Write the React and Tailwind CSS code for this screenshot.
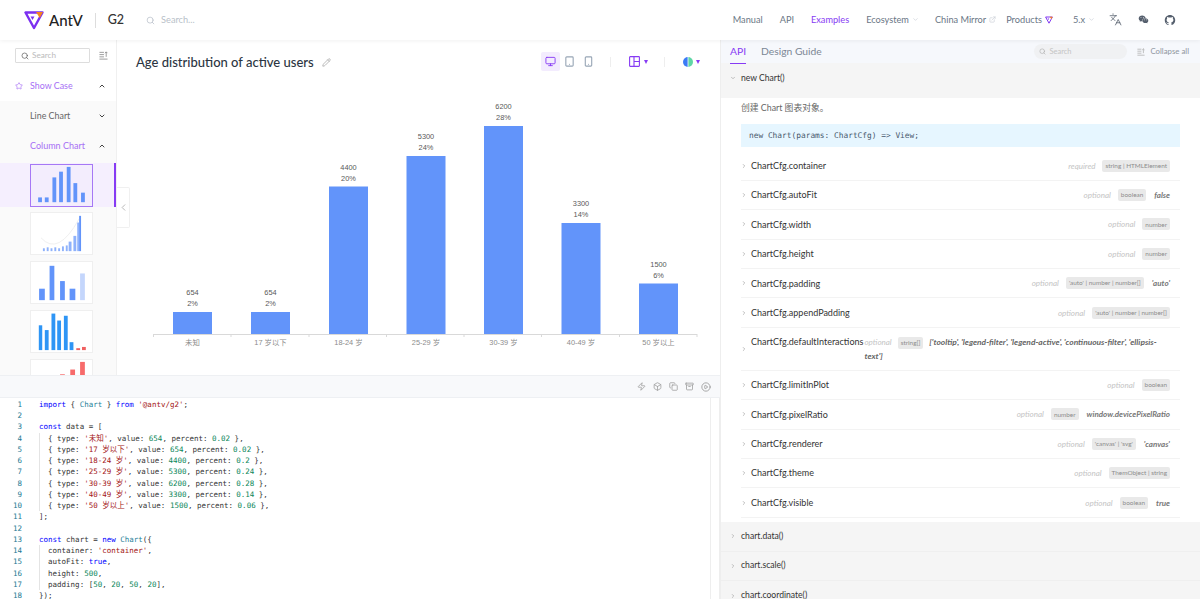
import {
  ChevronDown, ChevronLeft, ChevronRight, ChevronUp, CirclePlay, Copy, ExternalLink, Languages,
  Monitor, Pencil, Search, Smartphone, Star, Tablet, Zap, Box, Archive,
} from 'lucide-react';
import { AiFillWechat, AiOutlineGithub } from 'react-icons/ai';

const K = 'text-[#0000ff]';
const T = 'text-[#267f99]';
const S = 'text-[#a31515]';
const N = 'text-[#098658]';

const dataLine = (type, value, percent) => [
  ['  { type: '], [`'${type}'`, S], [', value: '], [value, N], [', percent: '], [percent, N], [' },'],
];

const CODE = [
  [['import', K], [' { '], ['Chart', T], [' } '], ['from', K], [' '], ["'@antv/g2'", S], [';']],
  [],
  [['const', K], [' data = [']],
  dataLine('未知', '654', '0.02'),
  dataLine('17 岁以下', '654', '0.02'),
  dataLine('18-24 岁', '4400', '0.2'),
  dataLine('25-29 岁', '5300', '0.24'),
  dataLine('30-39 岁', '6200', '0.28'),
  dataLine('40-49 岁', '3300', '0.14'),
  dataLine('50 岁以上', '1500', '0.06'),
  [['];']],
  [],
  [['const', K], [' chart = '], ['new', K], [' '], ['Chart', T], ['({']],
  [['  container: '], ["'container'", S], [',']],
  [['  autoFit: '], ['true', K], [',']],
  [['  height: '], ['500', N], [',']],
  [['  padding: ['], ['50', N], [', '], ['20', N], [', '], ['50', N], [', '], ['20', N], ['],']],
  [['});']],
];

const BARS = [
  { label: '未知', value: '654', pct: '2%', x: 56, top: 212 },
  { label: '17 岁以下', value: '654', pct: '2%', x: 134, top: 212 },
  { label: '18-24 岁', value: '4400', pct: '20%', x: 212, top: 86.5 },
  { label: '25-29 岁', value: '5300', pct: '24%', x: 289.5, top: 56 },
  { label: '30-39 岁', value: '6200', pct: '28%', x: 367, top: 26 },
  { label: '40-49 岁', value: '3300', pct: '14%', x: 444.5, top: 123 },
  { label: '50 岁以上', value: '1500', pct: '6%', x: 522, top: 183.5 },
];

const ROWS = [
  { name: 'ChartCfg.container', req: 'required', type: 'string | HTMLElement' },
  { name: 'ChartCfg.autoFit', req: 'optional', type: 'boolean', def: 'false' },
  { name: 'ChartCfg.width', req: 'optional', type: 'number' },
  { name: 'ChartCfg.height', req: 'optional', type: 'number' },
  { name: 'ChartCfg.padding', req: 'optional', type: "'auto' | number | number[]", def: "'auto'" },
  { name: 'ChartCfg.appendPadding', req: 'optional', type: "'auto' | number | number[]" },
];

const ROWS_AFTER = [
  { name: 'ChartCfg.limitInPlot', req: 'optional', type: 'boolean' },
  { name: 'ChartCfg.pixelRatio', req: 'optional', type: 'number', def: 'window.devicePixelRatio' },
  { name: 'ChartCfg.renderer', req: 'optional', type: "'canvas' | 'svg'", def: "'canvas'" },
  { name: 'ChartCfg.theme', req: 'optional', type: 'ThemObject | string' },
  { name: 'ChartCfg.visible', req: 'optional', type: 'boolean', def: 'true' },
];

function Logo({ className }) {
  return (
    <svg viewBox="0 0 20 20" className={className}>
      <path d="M1.5 2.5h17L10 18z" fill="none" stroke="#7b2ff0" strokeWidth="2.4" strokeLinejoin="round" />
      <path d="M12 2h7l-3.2 6z" fill="#f5841f" />
      <path d="M6.5 6.5h4L8.5 10z" fill="#7b2ff0" />
    </svg>
  );
}

function CollapseIcon({ className }) {
  return (
    <svg viewBox="0 0 10 10" className={className} fill="none" stroke="currentColor" strokeWidth="0.9">
      <path d="M0.5 1.5h5M0.5 4h5M0.5 6.5h5M0.5 9h9M8 6.5V1M6.6 2.4 8 1l1.4 1.4" />
    </svg>
  );
}

function LayoutIcon({ className }) {
  return (
    <svg viewBox="0 0 11 11" className={className} fill="none" stroke="currentColor" strokeWidth="1.1">
      <rect x="0.6" y="0.6" width="9.8" height="9.8" rx="0.6" />
      <path d="M5 0.6v9.8M5 5.5h5.4" />
    </svg>
  );
}

function Thumb({ bars, color = '#6294fa', selected, bottom = 39, children }) {
  return (
    <div className={`h-[43px] w-[63px] shrink-0 ${selected ? 'border-[1.5px] border-[#a678f5] bg-[#f3edfd]' : 'border border-[#efefef] bg-white'}`}>
      <svg viewBox="0 0 63 43" className="h-full w-full">
        {children}
        {bars.map(([x, top, w, fill], i) => (
          <rect key={i} x={x} y={top} width={w} height={bottom - top} fill={fill || color} />
        ))}
      </svg>
    </div>
  );
}

function Row({ row }) {
  return (
    <div className="flex h-[29.4px] items-center border-b border-[#f3f3f3] pr-[10px]">
      <ChevronRight className="mr-[4px] size-[6px] text-[#aaa]" strokeWidth={3} />
      <span className="text-[9px] text-[#333]">{row.name}</span>
      <span className="ml-auto text-[8px] text-[#c4c4c4] italic">{row.req}</span>
      <span className="ml-[7px] flex h-[12px] items-center rounded-[2px] bg-[#e9e9e9] px-[3px] text-[6.4px] text-[#8c8c8c]">{row.type}</span>
      {row.def && <span className="ml-[8px] text-[8px] font-bold text-[#777] italic">{row.def}</span>}
    </div>
  );
}

function SectionHead({ children, className, open }) {
  const Icon = open ? ChevronDown : ChevronRight;
  return (
    <div className={`flex items-center bg-[#f5f5f5] pl-[9px] text-[8.6px] text-[#333] ${className}`}>
      <Icon className="mr-[5px] size-[6px] text-[#aaa]" strokeWidth={3} />
      {children}
    </div>
  );
}

export default function App() {
  return (
    <div className="flex h-[599px] w-[1200px] flex-col overflow-hidden bg-white font-['Lato','Noto_Sans_CJK_SC',sans-serif]">
      {/* header */}
      <header className="relative z-10 flex h-[40px] shrink-0 items-center bg-white pl-[24px] shadow-[0_1px_4px_rgba(0,0,0,0.06)]">
        <Logo className="size-[20px]" />
        <span className="ml-[5px] text-[15px] font-medium text-[#222]">AntV</span>
        <span className="ml-[12px] h-[15px] w-px bg-[#ddd]" />
        <span className="ml-[12px] text-[12.5px] font-medium text-[#333]">G2</span>
        <Search className="ml-[22px] size-[9px] text-[#b8bfc9]" />
        <span className="ml-[6px] text-[9.2px] text-[#b8bfc9]">Search...</span>

        <nav className="ml-auto flex items-center pr-[24px] text-[9.2px] text-[#6a7685]">
          <span>Manual</span>
          <span className="ml-[17px]">API</span>
          <span className="relative ml-[17px] text-[#873bf4]">
            Examples
            <span className="absolute top-[-15px] right-0 left-0 h-[1.5px] bg-[#873bf4]" />
          </span>
          <span className="ml-[17px]">Ecosystem</span>
          <ChevronDown className="ml-[3px] size-[7px] text-[#c5cad2]" />
          <span className="ml-[16px]">China Mirror</span>
          <ExternalLink className="ml-[3px] size-[7px] text-[#c5cad2]" />
          <span className="ml-[10px]">Products</span>
          <Logo className="ml-[3px] size-[8px]" />
          <span className="ml-[20px]">5.x</span>
          <ChevronDown className="ml-[3px] size-[7px] text-[#c5cad2]" />
          <Languages className="ml-[14px] size-[13px] text-[#555f6d]" strokeWidth={1.5} />
          <AiFillWechat className="ml-[16px] size-[11px] text-[#555f6d]" />
          <AiOutlineGithub className="ml-[15px] size-[12px] text-[#555f6d]" />
        </nav>
      </header>

      <div className="flex min-h-0 flex-1">
        {/* left column */}
        <div className="flex w-[720px] shrink-0 flex-col">
          <div className="relative flex h-[335px] shrink-0">
            <aside className="flex w-[117px] shrink-0 flex-col overflow-hidden border-r border-[#f0f0f0]">
              <div className="flex h-[23px] shrink-0 items-end pl-[15px]">
                <div className="flex h-[15px] w-[75px] items-center rounded-[1px] border border-[#ddd] pl-[5px]">
                  <Search className="size-[8px] text-[#555]" />
                  <span className="ml-[3px] text-[8.2px] text-[#bbb]">Search</span>
                </div>
                <CollapseIcon className="mb-[3px] ml-[9px] size-[9px] text-[#888]" />
              </div>
              <div className="flex h-[38px] shrink-0 items-center pt-[7px] pr-[10px] pl-[15px] text-[8.9px] text-[#a66ff5]">
                <Star className="size-[8px]" />
                <span className="ml-[7px]">Show Case</span>
                <ChevronUp className="ml-auto size-[8px] text-[#444]" strokeWidth={3} />
              </div>
              <div className="flex flex-1 flex-col bg-[#fafafa]">
                <div className="flex h-[29px] shrink-0 items-center pr-[10px] pl-[30px] text-[8.9px] text-[#666]">
                  <span>Line Chart</span>
                  <ChevronDown className="ml-auto size-[8px] text-[#444]" strokeWidth={3} />
                </div>
                <div className="flex h-[33px] shrink-0 items-center pr-[10px] pb-[2px] pl-[30px] text-[9px] text-[#a66ff5]">
                  <span>Column Chart</span>
                  <ChevronUp className="ml-auto size-[8px] text-[#444]" strokeWidth={3} />
                </div>
                <div className="flex h-[44px] shrink-0 items-center border-r-2 border-[#873bf4] bg-[#f5effe] pl-[30px]">
                  <Thumb selected bars={[[7, 34, 4], [14, 34, 4], [22, 13, 4], [29, 7, 4], [37, 2, 4], [44, 19, 4], [52, 29, 4]]} />
                </div>
                <div className="mt-[5px] flex flex-col gap-[6px] pl-[30px]">
                  <Thumb color="#8fb2fb" bottom={40} bars={[[12, 37, 2], [16, 36, 2], [20, 37, 2], [24, 36, 2], [28, 37, 2], [32, 35, 2], [36, 34, 2], [39, 30, 3], [44, 24, 3], [48, 10, 2], [50, 3, 2, '#6294fa']]}>
                    <path d="M10 26Q28 46 50 6" fill="none" stroke="#e3e3e3" strokeWidth="0.6" />
                  </Thumb>
                  <Thumb bottom={40} bars={[[8, 28, 6], [19, 4, 5], [30, 20, 5], [40, 28, 6], [51, 12, 5, '#c4d6fc']]} />
                  <Thumb color="#2e95f5" bottom={41} bars={[[7.7, 15, 3.6], [14, 20, 4], [21, 2.7, 4], [27, 10, 4], [34, 5, 4], [40, 32.7, 4], [47, 39, 4, '#f06060'], [53, 37.7, 4, '#f06060']]} />
                  <Thumb bottom={43} bars={[[30, 15, 5, '#f76b6b'], [40.7, 10, 5, '#f76b6b'], [51, 2, 5, '#f76b6b']]} />
                </div>
              </div>
            </aside>

            <button className="absolute top-[147px] left-[117px] z-10 flex h-[41px] w-[13px] items-center justify-center rounded-r-[2px] border border-l-0 border-[#f0f0f0] bg-white">
              <ChevronLeft className="size-[11px] text-[#999]" strokeWidth={1.5} />
            </button>

            <main className="min-w-0 flex-1">
              <div className="flex h-[60px] items-start pt-[12px] pr-[20px] pl-[19px]">
                <h1 className="text-[13px] leading-[20px] font-medium text-[#2c3542]">Age distribution of active users</h1>
                <Pencil className="mt-[6px] ml-[8px] size-[9px] text-[#a5a5a5]" />
                <div className="ml-auto flex items-center">
                  <span className="flex h-[19px] w-[19px] items-center justify-center rounded-[2px] bg-[#f3ecfe]">
                    <Monitor className="size-[11px] text-[#873bf4]" />
                  </span>
                  <Tablet className="ml-[4px] size-[11px] text-[#97a5b5]" strokeWidth={2.4} />
                  <Smartphone className="ml-[8px] size-[11px] text-[#97a5b5]" strokeWidth={2.4} />
                  <span className="ml-[16px] h-[10px] w-px bg-[#eee]" />
                  <LayoutIcon className="ml-[18px] size-[11px] text-[#873bf4]" />
                  <span className="ml-[4px] size-0 border-x-[2.5px] border-t-[4px] border-x-transparent border-t-[#873bf4]" />
                  <span className="ml-[16px] h-[10px] w-px bg-[#eee]" />
                  <span className="ml-[18px] size-[10px] rounded-full bg-[linear-gradient(90deg,#3b7bf5_0%,#3b7bf5_42%,#ffffff_50%,#5fd6a5_58%,#5fd6a5_100%)]" />
                  <span className="ml-[3px] size-0 border-x-[2.5px] border-t-[4px] border-x-transparent border-t-[#873bf4]" />
                </div>
              </div>

              <svg width="603" height="255" className="block" fontFamily="'Liberation Sans','Noto Sans CJK SC',sans-serif">
                {BARS.map((b) => (
                  <g key={b.label}>
                    <rect x={b.x} y={b.top} width="39" height={234 - b.top} fill="#6294fa" />
                    <text x={b.x + 19.5} y={b.top - 17} textAnchor="middle" fontSize="7.4" fill="#595959">{b.value}</text>
                    <text x={b.x + 19.5} y={b.top - 6} textAnchor="middle" fontSize="7.4" fill="#595959">{b.pct}</text>
                    <text x={b.x + 19.5} y={245} textAnchor="middle" fontSize="7.4" fill="#8c8c8c">{b.label}</text>
                  </g>
                ))}
                <line x1="36" y1="234.5" x2="580" y2="234.5" stroke="#d9d9d9" />
                {[36.5, 114, 192, 269.5, 347, 424.5, 502.5, 580].map((x) => (
                  <line key={x} x1={x} y1="234" x2={x} y2="237" stroke="#d9d9d9" />
                ))}
              </svg>
            </main>
          </div>

          {/* editor */}
          <div className="flex h-[23px] shrink-0 items-center justify-end gap-[7px] border-y border-[#eef0f3] bg-[#f8f9fb] pr-[9px] text-[#999]">
            <Zap className="size-[9px]" />
            <Box className="size-[9px]" />
            <Copy className="size-[9px]" />
            <Archive className="size-[9px]" />
            <CirclePlay className="size-[10px]" />
          </div>
          <div className="flex min-h-0 flex-1 overflow-hidden border-r border-[#eee] font-['DejaVu_Sans_Mono','Noto_Sans_CJK_SC',monospace] text-[7.5px] leading-[11.24px] text-[#333]">
            <div className="mr-[17px] w-[22px] shrink-0 pt-[1px] text-right text-[#237893]">
              {CODE.map((_, i) => (
                <div key={i} className="h-[11.24px]">{i + 1}</div>
              ))}
            </div>
            <div className="min-w-0 flex-1 pt-[1px] whitespace-pre">
              {CODE.map((line, i) => (
                <div key={i} className={`h-[11.24px] ${line[0]?.[0].startsWith('  ') ? 'shadow-[inset_1px_0_0_#e4e4e4]' : ''}`}>
                  {line.map(([text, cls], j) => (
                    <span key={j} className={cls}>{text}</span>
                  ))}
                </div>
              ))}
            </div>
            <div className="w-[9px] shrink-0 border-l border-[#eee]" />
          </div>
        </div>

        {/* right panel */}
        <section className="flex min-w-0 flex-1 flex-col overflow-hidden border-l border-[#eeeeee]">
          <div className="flex h-[23px] shrink-0 items-center bg-[#f6f8fc] pr-[11px] pl-[9px]">
            <span className="relative text-[10.3px] text-[#873bf4]">
              API
              <span className="absolute right-0 bottom-[-5px] left-0 h-[1px] bg-[#873bf4]" />
            </span>
            <span className="ml-[15px] text-[10.3px] text-[#7b8694]">Design Guide</span>
            <div className="ml-auto flex h-[15px] w-[93px] items-center rounded-full bg-[#f0f1f3] pl-[5px]">
              <Search className="size-[7px] text-[#aaa]" />
              <span className="ml-[3px] text-[7.5px] text-[#c4c4c4]">Search</span>
            </div>
            <CollapseIcon className="ml-[10px] size-[8px] text-[#aaa]" />
            <span className="ml-[5px] text-[7.8px] text-[#8f96a0]">Collapse all</span>
          </div>

          <SectionHead open className="h-[35px] shrink-0 pb-[5px]">new Chart()</SectionHead>

          <div className="flex h-[424px] shrink-0 flex-col pr-[20px] pl-[20px]">
            <p className="pt-[3px] text-[8.8px] leading-[14px] text-[#666]">创建 Chart 图表对象。</p>
            <div className="mt-[9px] flex h-[23px] shrink-0 items-center bg-[#e6f6ff] pl-[8px] font-['DejaVu_Sans_Mono',monospace] text-[7.85px] text-[#46586c]">
              new Chart(params: ChartCfg) =&gt; View;
            </div>
            <div className="mt-[4.5px] flex flex-col">
              {ROWS.map((row) => (
                <Row key={row.name} row={row} />
              ))}
              <div className="flex h-[43px] items-center border-b border-[#f3f3f3] pr-[10px]">
                <ChevronRight className="mr-[4px] size-[6px] text-[#aaa]" strokeWidth={3} />
                <span className="mb-[14px] text-[9px] text-[#333]">ChartCfg.defaultInteractions</span>
                <div className="ml-[1px] min-w-0 flex-1 text-[8.4px] leading-[14px] font-bold text-[#666] italic">
                  <span className="text-[8px] font-normal text-[#c4c4c4]">optional</span>
                  <span className="mr-[4px] ml-[6px] inline-block h-[12px] rounded-[2px] bg-[#e9e9e9] px-[3px] text-[6.4px] leading-[12px] font-normal text-[#8c8c8c] not-italic">string[]</span>
                  {" ['tooltip', 'legend-filter', 'legend-active', 'continuous-filter', 'ellipsis-text']"}
                </div>
              </div>
              {ROWS_AFTER.map((row) => (
                <Row key={row.name} row={row} />
              ))}
            </div>
          </div>

          <SectionHead className="h-[29.5px] shrink-0 border-b border-[#efefef]">chart.data()</SectionHead>
          <SectionHead className="h-[29.5px] shrink-0 border-b border-[#efefef]">chart.scale()</SectionHead>
          <SectionHead className="h-[29.5px] shrink-0">chart.coordinate()</SectionHead>
        </section>
      </div>
    </div>
  );
}
